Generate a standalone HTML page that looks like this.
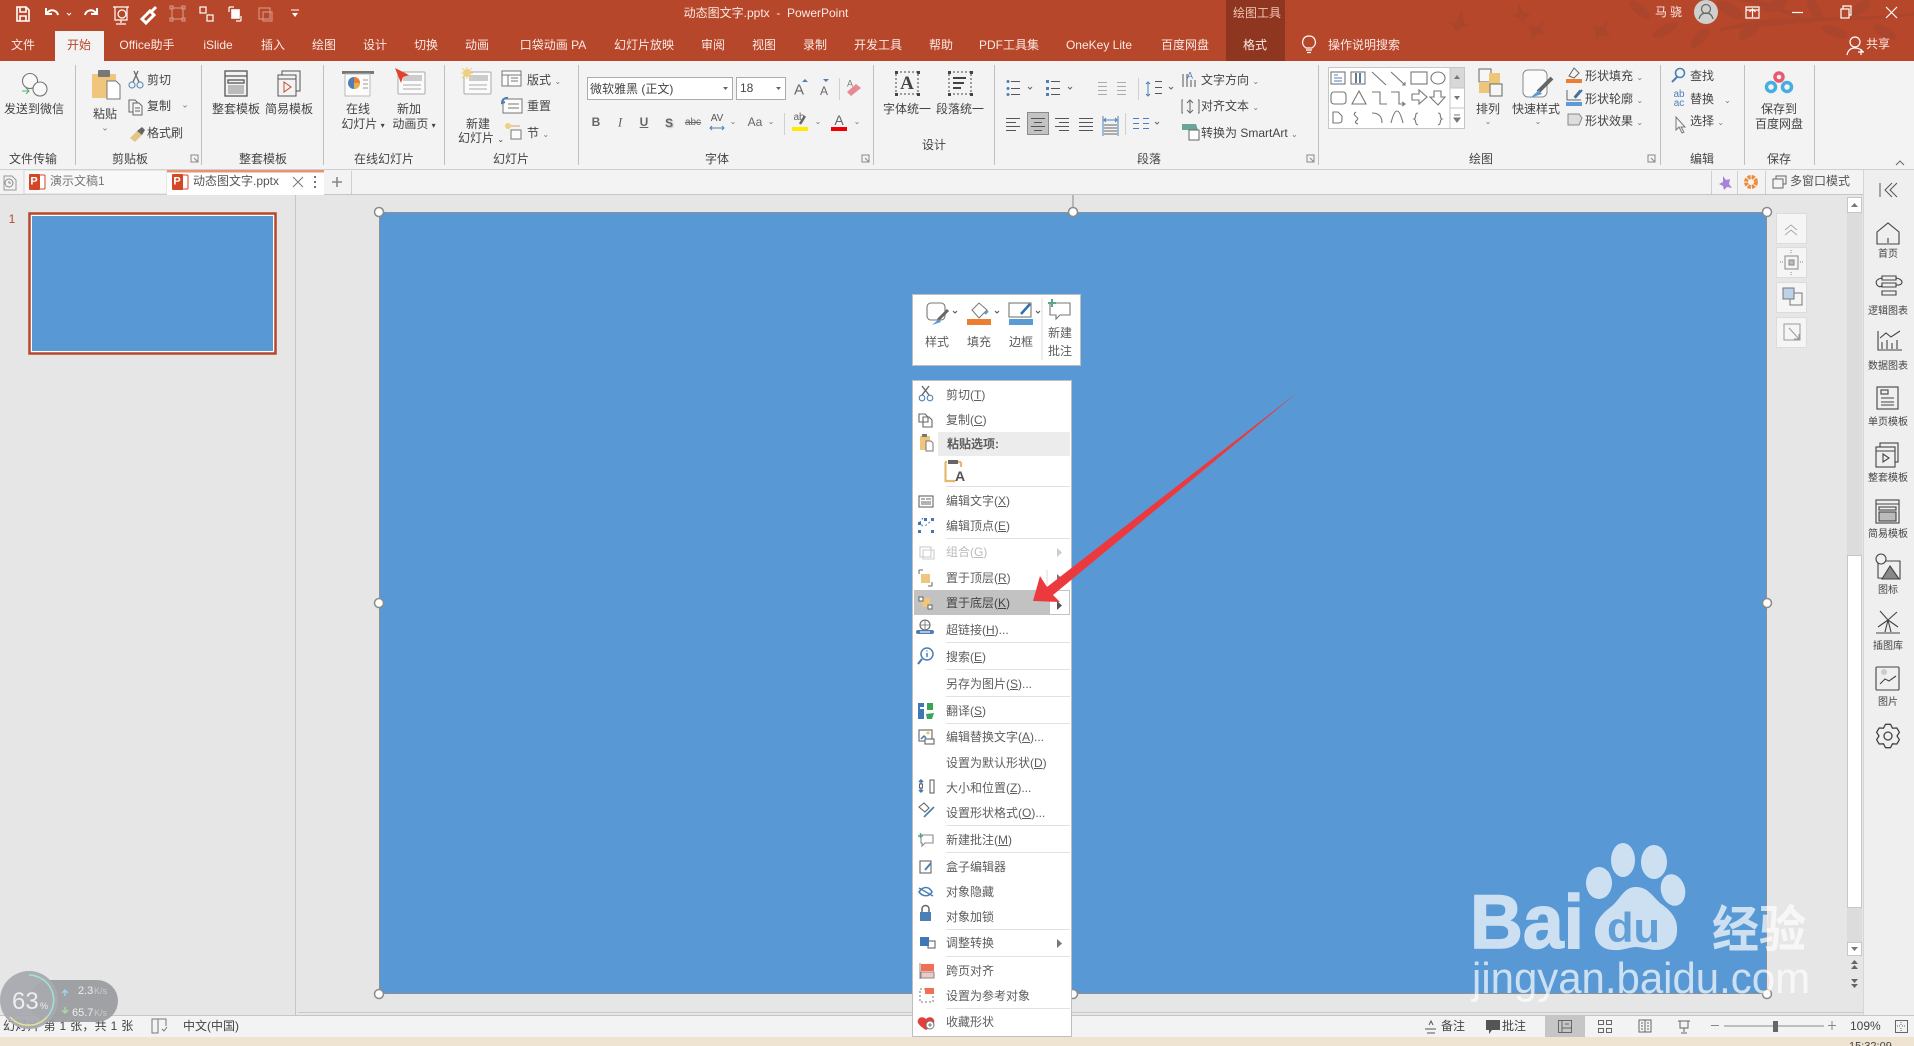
<!DOCTYPE html>
<html lang="zh"><head><meta charset="utf-8"><title>动态图文字.pptx - PowerPoint</title>
<style>
html,body{margin:0;padding:0;width:1914px;height:1046px;overflow:hidden;background:#e6e6e6}
body{position:relative;font:12px "Liberation Sans","Noto Sans CJK SC",sans-serif;color:#444}
svg.b{position:absolute;left:0;top:0}
.c,.l{position:absolute;white-space:nowrap;line-height:1}
.c{transform:translate(-50%,-50%)}
.l{transform:translateY(-50%)}
.w{color:#fbeae5}
.s{font-size:10px;color:#444}
.m{color:#5d5d5d}
.g{color:#777}
u{text-underline-offset:1px}
</style></head><body>
<svg class="b" width="1914" height="1046" viewBox="0 0 1914 1046" fill="none">
<rect width="1914" height="61" fill="#B7472A"/>
<g fill="#ab452b"><path d="M1914 14C1840 24 1780 12 1720 30M1800 18C1770 2 1750 0 1740 0" stroke="#ab452b" stroke-width="3"/>
<ellipse cx="1640" cy="10" rx="13" ry="5" transform="rotate(40 1640 10)"/><ellipse cx="1665" cy="30" rx="14" ry="5" transform="rotate(-30 1665 30)"/><ellipse cx="1730" cy="10" rx="15" ry="6" transform="rotate(30 1730 10)"/><ellipse cx="1750" cy="30" rx="14" ry="5" transform="rotate(-40 1750 30)"/><ellipse cx="1775" cy="6" rx="13" ry="5" transform="rotate(-20 1775 6)"/><ellipse cx="1815" cy="10" rx="13" ry="5" transform="rotate(60 1815 10)"/><ellipse cx="1835" cy="32" rx="14" ry="5" transform="rotate(20 1835 32)"/><ellipse cx="1860" cy="8" rx="12" ry="5" transform="rotate(-35 1860 8)"/><ellipse cx="1885" cy="32" rx="13" ry="5" transform="rotate(30 1885 32)"/><ellipse cx="1700" cy="38" rx="13" ry="5" transform="rotate(-50 1700 38)"/>
<path d="M1448 22l8 0 6-12 2 12 6 4-8 1-6 5-2-5z"/><path d="M1518 2l5 10 8 2-6 4-1 6-5-6-7-2 6-4z"/><path d="M1528 26l8 1 8-6-2 8 4 6-8-1-6 6-1-7z"/><path d="M1592 26l8 1 8-6-2 8 4 8-8-2-6 6-1-9z"/></g>
<rect x="1226" width="59" height="61" fill="#8f3620"/>
<rect x="55" y="31" width="49" height="30" fill="#f3f3f3"/>
<rect y="61" width="1914" height="108" fill="#f3f3f3"/>
<rect y="169" width="1914" height="1" fill="#cfcfcf"/>
<rect y="170" width="1914" height="24" fill="#f3f3f3"/>
<rect y="194" width="1863" height="1" fill="#c6c6c6"/>
<rect y="195" width="1863" height="821" fill="#e6e6e6"/>
<rect x="1863" y="170" width="51" height="846" fill="#efefef"/>
<rect x="1863" y="170" width="1" height="846" fill="#d6d6d6"/>
<rect y="1016" width="1914" height="21" fill="#f3f3f3"/>
<rect y="1015" width="1914" height="1" fill="#c6c6c6"/>
<rect y="1037" width="1914" height="9" fill="#efe3d2"/>
<rect x="298" y="1012" width="1565" height="1" fill="#cacaca"/>
<rect x="295" y="195" width="1" height="820" fill="#c6c6c6"/>

<!-- group separators -->
<g fill="#c0c0c0"><rect x="75" y="65" width="1" height="100"/><rect x="201" y="65" width="1" height="100"/><rect x="323" y="65" width="1" height="100"/><rect x="444" y="65" width="1" height="100"/><rect x="578" y="65" width="1" height="100"/><rect x="873" y="65" width="1" height="100"/><rect x="994" y="65" width="1" height="100"/><rect x="1318" y="65" width="1" height="100"/><rect x="1660" y="65" width="1" height="100"/><rect x="1744" y="65" width="1" height="100"/><rect x="1814" y="65" width="1" height="100"/></g>

<!-- QAT -->
<g stroke="#fff" stroke-width="1.6">
<path d="M17 7h9l3 3v11H17zM20 7v5h6V7M20 21v-5h6v5"/>
<path d="M58 15a6 6 0 0 0-10-3l-2 2M46 8v6h6" stroke-width="2"/>
<path d="M85 15a6 6 0 0 1 10-3l2 2M97 8v6h-6" stroke-width="2"/>
<path d="M113 7h16M115 7v13h12V7M121 20v3M116 24h10" stroke-width="1.2"/><circle cx="122" cy="14" r="4" stroke-width="1.2"/>
<path d="M142 19l8-8 4 4-8 8zM152 11l4-4" stroke-width="3"/>
<g opacity=".4" stroke-width="1.2"><rect x="172" y="8" width="11" height="11"/><rect x="170" y="6" width="3" height="3"/><rect x="182" y="6" width="3" height="3"/><rect x="170" y="18" width="3" height="3"/><rect x="182" y="18" width="3" height="3"/></g>
<rect x="200" y="7" width="6" height="6" stroke-width="1.2"/><rect x="207" y="15" width="6" height="6" stroke-width="1.2"/>
<path d="M229 7h5M229 7v5M241 21h-5M241 21v-5" stroke-width="1.2"/><rect x="232" y="10" width="7" height="8" fill="#fff"/>
<g opacity=".4" stroke-width="1.2"><rect x="259" y="8" width="11" height="11"/><rect x="263" y="12" width="9" height="9"/></g>
<path d="M291 10h8" stroke-width="1"/><path d="M292 13h6l-3 4z" fill="#fff" stroke="none"/>
<path d="M67 13l2 2 2-2" stroke-width="1"/>
</g>
<g stroke="#fff" stroke-width="1.2">
<path d="M1746 7h13v11h-13zM1752.500 17v-7M1749.500 12l3-3 3 3M1746 10h13" />
<path d="M1792 12.500h11"/>
<rect x="1841" y="9" width="8" height="9"/><path d="M1843 9V6h8v9h-2"/>
<path d="M1886 7l11 11M1897 7l-11 11"/>
<path d="M1306 48c-3-2-4-5-3-8 1-3 3-4 6-4s5 1 6 4c1 3 0 6-3 8zM1306 50h6M1307 52.500h4"/>
<circle cx="1855" cy="42" r="5"/><path d="M1847 55c1-5 4-7 8-7s7 2 8 4M1858 52h6M1861 49v6"/>
</g>
<circle cx="1706" cy="12" r="12" fill="#cfcfcf"/><circle cx="1706" cy="9" r="4.500" stroke="#666" stroke-width="1.200"/><path d="M1699 19c1-4 3-6 7-6s6 2 7 6" stroke="#666" stroke-width="1.200"/>

<!-- ribbon icons: left side -->
<g stroke="#777" stroke-width="1.100">
<circle cx="30" cy="81" r="7.500" fill="#f8f8f8"/><circle cx="40" cy="89" r="7" fill="#f8f8f8"/>
<path d="M22 91h7M26 88l3 3-3 3" stroke="#5cae78"/>
</g>
<rect x="92" y="74" width="24" height="24" rx="1" fill="#efc67c"/><rect x="98" y="70" width="12" height="7" rx="1" fill="#777"/>
<path d="M107 81h9l4 4v14h-13z" fill="#fff" stroke="#777"/>
<g stroke="#6a8fb8" stroke-width="1.200"><circle cx="132" cy="85" r="3"/><circle cx="140" cy="85" r="3"/></g><path d="M133 82l5-11M139 82l-5-11" stroke="#666" stroke-width="1.300"/>
<g stroke="#666"><path d="M129 100h6l3 3v9h-9z"/><path d="M133 103h6l3 3v9h-9z" fill="#f3f3f3"/><path d="M135 108h5M135 111h5"/></g>
<path d="M130 138l7-7 5 4-7 7z" fill="#e5c488"/><path d="M137 131l5-4 3 3-3 5z" fill="#666"/>
<g stroke="#555" stroke-width="1.300"><rect x="225" y="71" width="22" height="25"/><path d="M225 76h22"/><rect x="228" y="80" width="16" height="3"/></g><rect x="228" y="85" width="16" height="9" fill="#bbb"/>
<g stroke="#555"><rect x="282" y="71" width="18" height="20"/><rect x="278" y="75" width="18" height="21" fill="#f3f3f3"/><path d="M278 79h18"/></g><path d="M284 82l7 5-7 5z" stroke="#c9492c"/>
<rect x="342" y="71" width="32" height="3" fill="#777"/><rect x="345" y="74" width="25" height="22" fill="#fbfbfb" stroke="#bbb"/><circle cx="354" cy="83" r="6" fill="#4c7fb5"/><path d="M354 83V77a6 6 0 0 1 6 6z" fill="#ed7d31"/><path d="M354 83h6a6 6 0 0 1-6 6z" fill="#e4b04a"/><path d="M363 80h5M363 84h5M363 88h5" stroke="#999"/>
<rect x="398" y="72" width="27" height="22" rx="1" fill="#fbfbfb" stroke="#aaa"/><rect x="403" y="75" width="19" height="6" fill="#ccc"/><path d="M403 85h18M403 89h18" stroke="#aaa"/><path d="M395 68l14 7-6 2-2 6z" fill="#e2402d"/>
<rect x="464" y="72" width="27" height="22" rx="1" fill="#fbfbfb" stroke="#aaa"/><rect x="469" y="75" width="19" height="6" fill="#ccc"/><path d="M469 85h18M469 89h18" stroke="#aaa"/><circle cx="467" cy="73" r="4" fill="#f0cf80"/><path d="M467 67v12M461 73h12M462 68l10 10M472 68l-10 10" stroke="#f0cf80"/>
<g stroke="#777"><rect x="502" y="71" width="19" height="15" fill="#fbfbfb"/><path d="M502 75h19M508 75v11M511 78h7M511 81h7"/>
<rect x="503" y="99" width="19" height="14" fill="#fbfbfb"/><path d="M508 104h11M508 108h11"/>
<rect x="511" y="130" width="10" height="9" fill="#fbfbfb"/><path d="M510 126h10" stroke="#d69f6b"/></g>
<path d="M508 98a5 5 0 0 0-6 5l3-1" stroke="#4c7fb5" stroke-width="2"/><circle cx="508" cy="126" r="3" fill="#f0cf80"/>

<!-- font controls -->
<rect x="587.500" y="77.500" width="145" height="22" fill="#fff" stroke="#ababab"/>
<rect x="736.500" y="77.500" width="49" height="22" fill="#fff" stroke="#ababab"/>
<path d="M723 87h5l-2.500 3zM776 87h5l-2.500 3z" fill="#666"/>
<rect x="839" y="78" width="1" height="22" fill="#d0d0d0"/><rect x="784" y="113" width="1" height="22" fill="#d0d0d0"/>
<path d="M802 82l3-3 3 3zM829 79l-3 3-3-3z" fill="#4c7fb5"/>
<path d="M851 96l-4-4 9-8 5 4z" fill="#e78992"/>
<path d="M710 128h14M712 126l-2 2 2 2M722 126l2 2-2 2" stroke="#4c7fb5"/>
<rect x="792" y="127" width="16" height="4" fill="#ffeb00"/><rect x="831" y="127" width="16" height="4" fill="#f00000"/>
<path d="M805 116l-5 8" stroke="#666" stroke-width="2.500"/>
<g stroke="#444" stroke-dasharray="2 2"><rect x="896" y="72" width="22" height="22"/><rect x="949" y="72" width="22" height="22"/></g>
<g fill="#444"><rect x="895" y="71" width="3" height="3"/><rect x="917" y="71" width="3" height="3"/><rect x="895" y="93" width="3" height="3"/><rect x="917" y="93" width="3" height="3"/><rect x="948" y="71" width="3" height="3"/><rect x="970" y="71" width="3" height="3"/><rect x="948" y="93" width="3" height="3"/><rect x="970" y="93" width="3" height="3"/><rect x="953" y="77" width="13" height="2"/><rect x="953" y="82" width="11" height="2"/><rect x="953" y="87" width="8" height="2"/></g>

<!-- paragraph -->
<g stroke="#555"><path d="M1011 81.500h9M1011 88.500h9M1011 94.500h9M1051 81.500h9M1051 88.500h9M1051 94.500h9"/>
<path d="M1098 82.500h9M1098 86.500h9M1098 90.500h9M1098 94.500h9M1117 82.500h9M1117 86.500h9M1117 90.500h9M1117 94.500h9" stroke="#aaa"/>
<path d="M1155 81.500h7M1155 87.500h7M1155 93.500h7"/>
<path d="M1006 118.500h14M1006 122.500h10M1006 126.500h14M1006 130.500h10M1055 118.500h14M1059 122.500h10M1055 126.500h14M1059 130.500h10M1079 118.500h14M1079 122.500h14M1079 126.500h14M1079 130.500h14"/></g>
<g fill="#4c7fb5"><circle cx="1008" cy="81.500" r="1.500"/><circle cx="1008" cy="88.500" r="1.500"/><circle cx="1008" cy="94.500" r="1.500"/><rect x="1046" y="80" width="3" height="3"/><rect x="1046" y="87" width="3" height="3"/><rect x="1046" y="93" width="3" height="3"/></g>
<path d="M1028 87l2 2 2-2M1068 87l2 2 2-2M1169 87l2 2 2-2M1155 122l2 2 2-2" stroke="#666"/>
<rect x="1027.500" y="112.500" width="21" height="22" fill="#c3c3c3" stroke="#8a8a8a"/>
<path d="M1031 118.500h14M1034 122.500h8M1031 126.500h14M1034 130.500h8" stroke="#555"/>
<path d="M1103 116v20M1118 116v20M1104 120h13M1106 118l-2 2 2 2M1115 118l2 2-2 2" stroke="#4c7fb5"/>
<path d="M1104 125h13M1104 128h13M1104 131h13M1104 134h13" stroke="#666"/>
<rect x="1138" y="78" width="1" height="22" fill="#d0d0d0"/><rect x="1125" y="113" width="1" height="22" fill="#d0d0d0"/>
<path d="M1133 118.500h6M1133 123.500h6M1133 128.500h6M1143 118.500h6M1143 123.500h6M1143 128.500h6" stroke="#4c7fb5"/>
<path d="M1148 82v14M1146 84l2-2 2 2M1146 94l2 2 2-2" stroke="#4c7fb5"/>
<path d="M1183 74v13M1187 74v13M1191 80v7M1195 80v7" stroke="#555"/>
<path d="M1183 100h-1v13h1M1198 100h1v13h-1M1190 100v13M1187 103l3-3 3 3M1187 110l3 3 3-3" stroke="#666"/>
<path d="M1182 124h14l2 6h-16z" fill="#6aa59a"/><rect x="1189" y="130" width="10" height="10" fill="#fff" stroke="#666"/>

<!-- gallery -->
<rect x="1328.500" y="67.500" width="136" height="61" fill="#fff" stroke="#c6c6c6"/>
<rect x="1450" y="68" width="14" height="20" fill="#d8d8d8"/><path d="M1450 68v60M1450 88h14M1450 108h14" stroke="#c6c6c6"/>
<path d="M1454 79h6l-3-4zM1454 96h6l-3 4z" fill="#777"/><path d="M1454 115h6M1454 118h6l-3 4z" fill="#777" stroke="#777"/>
<g stroke="#777" stroke-width="1.100">
<rect x="1331" y="72" width="14" height="12"/><rect x="1351" y="72" width="14" height="12"/>
<path d="M1372 72l14 13M1391 72l14 13M1402 85h3v-3"/>
<rect x="1411" y="72" width="16" height="12"/><ellipse cx="1438" cy="78" rx="7" ry="6"/>
<rect x="1331" y="92" width="15" height="12" rx="3"/><path d="M1359 91l7 13h-14zM1372 92h8v12h7M1391 92h8v12h6M1402 102l3 2-3 2"/>
<path d="M1412 94h7v-4l8 7-8 7v-4h-7zM1434 91h7v6h4l-7 8-8-8h4z"/>
<path d="M1333 112h5l4 4v4a3 3 0 0 1-3 3h-6zM1356 112c-6 4 6 5 0 9c-2 2 2 3 2 3M1372 113c7 0 10 4 10 10M1391 123c4-16 8-16 12 0M1418 113c-4 0-1 5-4 6c3 1 0 5 4 6M1438 113c4 0 1 5 4 6c-3 1 0 5-4 6"/>
</g>
<rect x="1355" y="73" width="2" height="10" fill="#777"/><rect x="1359" y="73" width="2" height="10" fill="#4c7fb5"/>
<path d="M1334 75h4M1334 78h8M1334 81h8" stroke="#4c7fb5"/>
<!-- arrange etc -->
<rect x="1479" y="69" width="12" height="13" fill="#f6f6f6" stroke="#666"/><rect x="1489" y="73" width="11" height="11" fill="#eec67a"/><rect x="1479" y="82" width="11" height="11" fill="#eec67a"/><rect x="1490" y="84" width="12" height="12" fill="#f6f6f6" stroke="#666"/>
<rect x="1523" y="70" width="24" height="27" rx="5" fill="#fbfbfb" stroke="#888"/><path d="M1552 78l-14 14" stroke="#666" stroke-width="4"/><path d="M1530 98l9-8 3 4z" fill="#5b9bd5"/>
<rect x="1566" y="79" width="16" height="4" fill="#ed7d31"/><rect x="1566" y="102" width="16" height="4" fill="#5b9bd5"/>
<path d="M1569 76l5-8 5 5-5 5z" stroke="#666"/><path d="M1567 90v10h14M1580 90l-6 7" stroke="#666"/><path d="M1582 90l-7 8" stroke="#2f6fad" stroke-width="2"/>
<path d="M1568 114h11l3 4-3 7h-11z" fill="#ddd" stroke="#888"/>
<circle cx="1680" cy="73" r="4.500" stroke="#4c7fb5" stroke-width="1.600"/><path d="M1677 77l-5 5" stroke="#4c7fb5" stroke-width="2"/>
<path d="M1676 117v13l3-3 3 6 2-1-3-5h4z" fill="#f5f5f5" stroke="#777"/>
<g stroke-width="3.500"><circle cx="1771" cy="87" r="4.500" stroke="#45aee0"/><circle cx="1787" cy="87" r="4.500" stroke="#45aee0"/><circle cx="1779" cy="77" r="4" stroke="#e95a6e"/></g>
<path d="M1896 165l4-4 4 4" stroke="#666"/>
<g stroke="#888"><path d="M191 155h7v7h-7zM194 158l4 4M198 159v3h-3"/><path d="M862 155h7v7h-7zM865 158l4 4M869 159v3h-3"/><path d="M1307 155h7v7h-7zM1310 158l4 4M1314 159v3h-3"/><path d="M1648 155h7v7h-7zM1651 158l4 4M1655 159v3h-3"/></g>

<!-- tab strip -->
<rect x="24" y="170" width="143" height="24" fill="#f8f8f8" stroke="#d6d6d6"/>
<rect x="167" y="170" width="157" height="25" fill="#fff"/><rect x="167" y="170" width="157" height="2.500" fill="#e8956f"/>
<path d="M351.500 171v23M1711.500 171v23M1737.500 171v23M1765.500 171v23" stroke="#cfcfcf"/>
<path d="M4 176h8l4 4v10H4z" stroke="#999"/><circle cx="9" cy="183" r="4" stroke="#888"/><path d="M9 181v2h2" stroke="#888"/>
<g><rect x="35" y="175" width="10" height="14" rx="1" fill="#fff" stroke="#d24726"/><rect x="29" y="174" width="11" height="16" rx="1" fill="#d24726"/><rect x="178" y="175" width="10" height="14" rx="1" fill="#fff" stroke="#d24726"/><rect x="172" y="174" width="11" height="16" rx="1" fill="#d24726"/></g>
<path d="M293 177l10 10M303 177l-10 10" stroke="#777"/>
<g fill="#666"><circle cx="315" cy="177" r="1.100"/><circle cx="315" cy="182" r="1.100"/><circle cx="315" cy="187" r="1.100"/></g>
<path d="M337 177v10M332 182h10" stroke="#888" stroke-width="1.600"/>
<path d="M1723 176l3 4 4-1-1 5 3 4-5-1-3 3-1-4-4-2 4-2z" fill="#a884d8"/>
<circle cx="1751" cy="182" r="5" stroke="#ed8b3a" stroke-width="4" stroke-dasharray="3 1"/>
<rect x="1773" y="179" width="10" height="9" stroke="#666"/><path d="M1776 179v-3h10v8h-3" stroke="#666"/>
<path d="M1880 183v14M1892 183l-7 7 7 7M1897 183l-7 7 7 7" stroke="#555"/>

<!-- side buttons + slide -->
<g fill="#f5f5f5" stroke="#dcdcdc"><rect x="1776.500" y="213.500" width="30" height="30"/><rect x="1776.500" y="247.500" width="30" height="30"/><rect x="1776.500" y="282.500" width="30" height="30"/><rect x="1776.500" y="317.500" width="30" height="30"/></g>
<path d="M1785 230l6-5 6 5M1785 235l6-5 6 5" stroke="#aaa"/>
<rect x="1785" y="256" width="13" height="13" stroke="#888"/><rect x="1789" y="260" width="5" height="5" fill="#bbb" stroke="#888"/>
<path d="M1791 250v3M1791 272v3M1780 262h3M1800 262h3" stroke="#888" stroke-dasharray="1 1"/>
<rect x="1790" y="293" width="12" height="12" stroke="#777"/><rect x="1783" y="288" width="11" height="11" fill="#bcd2ea" stroke="#777"/>
<path d="M1784 324h16v16h-16zM1789 328l10 11M1799 334v5h-5" stroke="#999"/>
<rect x="1847" y="197" width="15" height="758" fill="#dcdcdc"/>
<rect x="1847.500" y="197.500" width="14" height="15" fill="#fff" stroke="#c6c6c6"/><path d="M1851 207h7l-3.500-4z" fill="#777"/>
<rect x="1847.500" y="555.500" width="14" height="352" fill="#fff" stroke="#c6c6c6"/>
<rect x="1847.500" y="942.500" width="14" height="13" fill="#fff" stroke="#c6c6c6"/><path d="M1851 947h7l-3.500 4z" fill="#777"/>
<path d="M1851 964l3.500-4 3.500 4zM1851 969l3.500-4 3.500 4zM1851 979l3.500 4 3.500-4zM1851 984l3.500 4 3.500-4z" fill="#666"/>

<path d="M1073 195v17" stroke="#888"/>
<rect x="379.500" y="212.500" width="1387" height="781" fill="#5899D5" stroke="#8a9096"/>
<g fill="#fff" stroke="#8b8b8b" stroke-width="1.500"><circle cx="379" cy="212" r="4.500"/><circle cx="1073" cy="212" r="4.500"/><circle cx="1767" cy="212" r="4.500"/><circle cx="379" cy="603" r="4.500"/><circle cx="1767" cy="603" r="4.500"/><circle cx="379" cy="994" r="4.500"/><circle cx="1073" cy="994" r="4.500"/><circle cx="1767" cy="994" r="4.500"/></g>
<rect x="29.500" y="213.500" width="246" height="140" fill="#fff" stroke="#b7472a" stroke-width="2.500"/><rect x="32" y="216" width="241" height="135" fill="#5899D5"/>

<!-- right panel icons -->
<g stroke="#444" stroke-width="1.100" fill="none">
<path d="M1877 232l11-9 11 9v12h-22zM1888 238v5"/>
<path d="M1882 276h14v4h-14zM1882 283h14v4h-14zM1882 291h14v4h-14zM1882 278c-12 2-2 13 0 7M1896 278c8 1 8 8 0 7"/>
<path d="M1878 331v19h24M1882 349v-7M1887 349v-9M1892 349v-6M1897 349v-9M1880 338l6-5 5 4 9-6"/>
<rect x="1877" y="387" width="21" height="22"/><rect x="1881" y="390" width="7" height="4"/><path d="M1881 398h13M1881 402h13M1881 405h13"/>
<rect x="1880" y="443" width="18" height="19"/><rect x="1876" y="447" width="19" height="20" fill="#efefef"/><path d="M1876 451h19M1883 454l6 4-6 4z"/>
<rect x="1876" y="500" width="23" height="23"/><path d="M1876 504h23"/><rect x="1879" y="507" width="17" height="3"/><rect x="1879" y="512" width="17" height="9" fill="#bbb"/>
<path d="M1878 578v-17h22v18z"/><circle cx="1881" cy="559" r="5" fill="#efefef"/><path d="M1890 566l9 13h-17z" fill="#888"/>
<path d="M1876 633h24M1885 632l3-12 3 12M1888 620l-8-9M1888 620l9-8M1888 620l-10 7M1888 620l10 7"/>
<rect x="1876" y="667" width="23" height="23" rx="1"/><circle cx="1884" cy="672" r="3" fill="#ccc" stroke="none"/><path d="M1880 684l5-5 4 2 7-5"/>
<g transform="translate(1888,736)" stroke-width="1.300" stroke-linejoin="round"><path d="M-2.500-11.700L2.500-11.700L4.500-7.800L8.900-8L11.400-3.700L9 0L11.400 3.700L8.900 8L4.500 7.800L2.500 11.700L-2.500 11.700L-4.500 7.800L-8.900 8L-11.400 3.700L-9 0L-11.400-3.700L-8.900-8L-4.500-7.800Z"/><circle r="4"/></g>
</g>

<!-- mini toolbar & menu -->
<rect x="912.500" y="294.500" width="168" height="71" fill="#fff" stroke="#bfbfbf"/>
<rect x="912.500" y="380.500" width="159" height="656" fill="#fff" stroke="#bfbfbf"/>
<rect x="938" y="432" width="132" height="24" fill="#ececec"/>
<rect x="914" y="590" width="135" height="25" fill="#c2c2c2"/>
<rect x="1049.500" y="590.500" width="20" height="24" fill="#fff" stroke="#c2c2c2"/>
<g stroke="#e2e2e6"><path d="M946 486.500h124M946 538.500h124M946 642.500h124M946 669.500h124M946 696.500h124M946 723.500h124M946 825.500h124M946 852.500h124M946 929.500h124M946 956.500h124M946 1008.500h124"/></g>
<path d="M1042 298v62M1047 570v20" stroke="#dedede"/>
<g fill="#777"><path d="M1057 601v9l5-4.500z" fill="#555"/><path d="M1057 548v9l5-4.500z" fill="#ccc"/><path d="M1057 574v9l5-4.500z"/><path d="M1057 939v9l5-4.500z"/></g>
<!-- mini icons -->
<g stroke="#777" stroke-width="1.100"><rect x="927" y="303" width="18" height="17" rx="4"/><rect x="1009" y="303" width="22" height="14" fill="#fff"/><path d="M1050 303h20v12h-10l-4 4v-4h-6z"/></g>
<path d="M948 310l-10 10" stroke="#666" stroke-width="3"/><path d="M932 325l7-6 2 3z" fill="#5b9bd5"/>
<path d="M972 310l7-7 8 7-8 8z" stroke="#777"/><path d="M985 314l3-3" stroke="#5b9bd5" stroke-width="2"/>
<rect x="967" y="319" width="24" height="6" fill="#ed7d31"/><rect x="1009" y="319" width="24" height="6" fill="#5b9bd5"/>
<path d="M1021 314l9-10" stroke="#2f6fad" stroke-width="2.500"/>
<path d="M1048 303h8M1052 299v8" stroke="#5aa58a" stroke-width="2"/>
<path d="M953 311l2 2 2-2M995 311l2 2 2-2M1036 311l2 2 2-2" stroke="#555"/>
<!-- menu icons -->
<g stroke="#666" stroke-width="1.100">
<path d="M922 395l7-9M929 395l-7-9" stroke-width="1.400"/><circle cx="922" cy="398" r="2.800" stroke="#4c7fb5"/><circle cx="930" cy="398" r="2.800" stroke="#4c7fb5"/>
<path d="M919 414h6l3 3v5h-9zM923 417h6l3 3v7h-9z"/>
<rect x="919" y="496" width="14" height="11"/><path d="M921 499h4M926 499h5M921 502h10M921 504h10" stroke-width=".9"/>
<path d="M923 518l-3 4 3 5M930 522l-5 4" stroke="#4c7fb5" stroke-dasharray="2 2"/>
<g fill="#3f78b8" stroke="none"><rect x="918" y="522" width="3" height="3"/><rect x="924" y="518" width="3" height="3"/><rect x="931" y="518" width="3" height="3"/><rect x="918" y="530" width="3" height="3"/><rect x="931" y="530" width="3" height="3"/></g>
<rect x="920" y="547" width="11" height="10" stroke="#ccc"/><path d="M923 550h11v9h-11z" stroke="#ccc"/>
<circle cx="927" cy="654" r="6" stroke="#4c7fb5" stroke-width="1.500"/><path d="M922 659l-4 5" stroke="#4c7fb5" stroke-width="2.200"/><path d="M927 653v4M927 650.500v1" stroke="#4c7fb5" stroke-width="1.500"/>
<rect x="919" y="730" width="13" height="11"/><rect x="925" y="739" width="9" height="5" fill="#fff"/><circle cx="928" cy="733" r="1.500" fill="#edb96b" stroke="none"/><path d="M921 739l3-3 2 2" stroke="#3f78b8" stroke-width="1.500"/>
<rect x="930" y="780" width="4" height="13"/><path d="M921 780v12M919 782l2-2 2 2M919 790l2 2 2-2" stroke="#3f78b8" stroke-width="1.500"/><rect x="919.500" y="784" width="3" height="4" fill="#fff"/>
<path d="M919 807l5-4 5 5-4 4z"/><path d="M924 817l10-10" stroke="#4c7fb5" stroke-width="1.700"/>
<path d="M921 835h12v8h-8l-3 3v-3h-1z" stroke="#888"/><path d="M918 836h5M920.500 833v5" stroke="#5aa58a" stroke-width="1.500"/>
<rect x="920" y="861" width="11" height="12"/><path d="M925 870l6-7" stroke="#4c7fb5" stroke-width="2"/>
<path d="M919 892c4-6 10-6 13 0-3 5-9 5-13 0z" stroke="#4c7fb5" stroke-width="1.600"/><path d="M919 888l14 8" stroke="#4c7fb5" stroke-width="1.400"/>
<rect x="928" y="941" width="7" height="7"/>
<circle cx="925" cy="625" r="5"/><path d="M920 625h10M925 620v10" stroke-width=".8"/><path d="M918 632h6M926 632h6" stroke="#4c7fb5" stroke-width="4" stroke-linecap="round"/><path d="M920 632h10" stroke="#fff"/>
</g>
<rect x="920" y="436" width="10" height="14" fill="#efc67c"/><rect x="922" y="434" width="5" height="3" fill="#777"/><path d="M926 441h5l2 2v8h-7z" fill="#fff" stroke="#777"/>
<path d="M945.500 462v19h10M961 462v5M945 462h2M958 462h3" stroke="#e7b872" stroke-width="2.200"/><rect x="948" y="460" width="10" height="4" fill="#666"/>
<rect x="921" y="574" width="9" height="9" fill="#efc67c"/><rect x="922" y="598" width="8" height="9" fill="#efc67c"/><rect x="919" y="597" width="4" height="4" fill="#fff" stroke="#666"/><rect x="928" y="605" width="4" height="4" fill="#fff" stroke="#666"/>
<path d="M919 570h4M919 570v4M932 586h-4M932 586v-4" stroke="#666"/>
<path d="M918 703h6v4h-4v2h4v4h-6z" fill="#3f78b8"/><path d="M918 713h6v6h-6z" fill="#3f78b8"/><path d="M927 703h6v7h-6zM926 714l8-1-2 6h-5z" fill="#39a356"/>
<rect x="920" y="912" width="11" height="9" fill="#4c7fb5"/><path d="M922 912v-3a3.500 3.500 0 0 1 7 0v3" stroke="#666" stroke-width="1.500"/>
<rect x="920" y="937" width="9" height="9" fill="#3f78b8"/>
<rect x="921" y="964" width="13" height="7" fill="#f46d55"/><rect x="921" y="972" width="13" height="6" fill="#eecac4" stroke="#888"/><path d="M920 963v16" stroke="#888"/>
<rect x="920" y="989" width="13" height="13" stroke="#777" stroke-dasharray="2 2"/><rect x="925" y="988" width="9" height="6" fill="#f46d55"/>
<path d="M926 1030c-8-5-9-8-8-10 1-3 5-4 8-1 3-3 7-2 8 1 1 2 0 5-8 10z" fill="#e2403d"/><circle cx="930" cy="1025" r="4" fill="#fff" stroke="#777"/><path d="M928 1025h4M930 1023v4" stroke="#777"/>

<!-- status -->
<path d="M152 1019h6v14h-6zM158 1019h8v7M162 1029l2 2 3-4" stroke="#777"/>
<path d="M1425 1029h11M1427 1033h8M1429 1025l2-4 2 4" stroke="#555"/>
<path d="M1486 1020h14v10h-8l-3 4v-4h-3z" fill="#555"/>
<rect x="1545" y="1016" width="40" height="21" fill="#c6c6c6"/>
<rect x="1558.500" y="1020.500" width="13" height="12" stroke="#666"/><path d="M1562 1021v11M1562 1028h9M1565 1024h4" stroke="#666"/>
<g stroke="#666"><rect x="1598.500" y="1020.500" width="5" height="4"/><rect x="1606.500" y="1020.500" width="5" height="4"/><rect x="1598.500" y="1028.500" width="5" height="4"/><rect x="1606.500" y="1028.500" width="5" height="4"/>
<path d="M1639 1020h12v12h-12zM1645 1020v12M1641 1023h2M1647 1023h2M1641 1026h2M1647 1026h2M1641 1029h2M1647 1029h2"/>
<path d="M1678 1021h12M1680 1021v7h8v-7M1684 1028v4M1681 1033h6"/>
<path d="M1711 1025.500h8M1828 1025.500h8M1832 1021v9M1724 1026h100" stroke="#888"/>
<rect x="1895.500" y="1020.500" width="12" height="12"/><path d="M1901 1022v3M1901 1028v3M1897 1026h3M1902 1026h3" stroke-dasharray="1 1"/></g>
<rect x="1773" y="1021" width="5" height="11" fill="#666"/>
</svg>

<!-- tabs -->
<span class="c w" style="left:766px;top:13px">动态图文字.pptx&nbsp; - &nbsp;PowerPoint</span>
<span class="c" style="left:1257px;top:13px;color:#f2c4b4">绘图工具</span>
<span class="c w" style="left:1670px;top:12px;letter-spacing:3px">马骁</span>
<span class="c w" style="left:23px;top:45px">文件</span>
<span class="c" style="left:79px;top:45px;color:#b7472a">开始</span>
<span class="c w" style="left:147px;top:45px">Office助手</span>
<span class="c w" style="left:218px;top:45px">iSlide</span>
<span class="c w" style="left:273px;top:45px">插入</span>
<span class="c w" style="left:324px;top:45px">绘图</span>
<span class="c w" style="left:375px;top:45px">设计</span>
<span class="c w" style="left:426px;top:45px">切换</span>
<span class="c w" style="left:477px;top:45px">动画</span>
<span class="c w" style="left:553px;top:45px">口袋动画 PA</span>
<span class="c w" style="left:644px;top:45px">幻灯片放映</span>
<span class="c w" style="left:713px;top:45px">审阅</span>
<span class="c w" style="left:764px;top:45px">视图</span>
<span class="c w" style="left:815px;top:45px">录制</span>
<span class="c w" style="left:878px;top:45px">开发工具</span>
<span class="c w" style="left:941px;top:45px">帮助</span>
<span class="c w" style="left:1009px;top:45px">PDF工具集</span>
<span class="c w" style="left:1099px;top:45px">OneKey Lite</span>
<span class="c w" style="left:1185px;top:45px">百度网盘</span>
<span class="c w" style="left:1255px;top:45px">格式</span>
<span class="l w" style="left:1328px;top:45px">操作说明搜索</span>
<span class="l w" style="left:1866px;top:44px">共享</span>

<!-- ribbon text -->
<span class="c" style="left:34px;top:109px">发送到微信</span>
<span class="c" style="left:105px;top:114px">粘贴</span><span class="c g" style="left:105px;top:128px;font-size:9px">⌄</span>
<span class="l" style="left:147px;top:80px">剪切</span>
<span class="l" style="left:147px;top:106px">复制</span><span class="c g" style="left:185px;top:105px;font-size:9px">⌄</span>
<span class="l" style="left:147px;top:133px">格式刷</span>
<span class="c" style="left:236px;top:109px">整套模板</span>
<span class="c" style="left:289px;top:109px">简易模板</span>
<span class="c" style="left:358px;top:109px">在线</span><span class="c" style="left:363px;top:124px">幻灯片 <small style="font-size:8px">▾</small></span>
<span class="c" style="left:409px;top:109px">新加</span><span class="c" style="left:414px;top:124px">动画页 <small style="font-size:8px">▾</small></span>
<span class="c" style="left:478px;top:124px">新建</span><span class="c" style="left:481px;top:138px">幻灯片 <small style="font-size:8px">⌄</small></span>
<span class="l" style="left:527px;top:80px">版式 <small class="g" style="font-size:8px">⌄</small></span>
<span class="l" style="left:527px;top:106px">重置</span>
<span class="l" style="left:527px;top:133px">节 <small class="g" style="font-size:8px">⌄</small></span>
<span class="l" style="left:590px;top:89px">微软雅黑 (正文)</span>
<span class="l" style="left:740px;top:88px">18</span>
<span class="c" style="left:799px;top:90px;font-size:15px;color:#666">A</span>
<span class="c" style="left:824px;top:91px;font-size:12px;color:#666">A</span>
<span class="c g" style="left:850px;top:84px;font-size:9px">A</span>
<span class="c" style="left:596px;top:122px;font-weight:bold;color:#666">B</span>
<span class="c" style="left:620px;top:122px;font-style:italic;font-family:'Liberation Serif',serif;color:#666;font-size:13px">I</span>
<span class="c" style="left:644px;top:122px;text-decoration:underline;font-weight:bold;color:#666">U</span>
<span class="c" style="left:669px;top:123px;font-weight:bold;color:#666;text-shadow:1px 1px 1px #bbb">S</span>
<span class="c" style="left:693px;top:123px;font-size:10px;text-decoration:line-through;color:#666">abc</span>
<span class="c" style="left:717px;top:119px;font-size:10px;color:#555">AV</span><span class="c g" style="left:733px;top:122px;font-size:8px">⌄</span>
<span class="c" style="left:755px;top:122px;color:#666">Aa</span><span class="c g" style="left:771px;top:122px;font-size:8px">⌄</span>
<span class="c" style="left:799px;top:118px;font-size:10px;color:#666">ab</span><span class="c g" style="left:818px;top:122px;font-size:8px">⌄</span>
<span class="c" style="left:839px;top:120px;font-size:14px;color:#666">A</span><span class="c g" style="left:857px;top:122px;font-size:8px">⌄</span>
<span class="c" style="left:717px;top:159px">字体</span>
<span class="c" style="left:907px;top:84px;font:bold 19px 'Liberation Serif',serif">A</span>
<span class="c" style="left:907px;top:109px">字体统一</span>
<span class="c" style="left:960px;top:109px">段落统一</span>
<span class="c" style="left:934px;top:145px">设计</span>
<span class="c" style="left:1149px;top:159px">段落</span>
<span class="c" style="left:1190px;top:76px;font-size:9px;color:#4c7fb5">A</span>
<span class="l" style="left:1201px;top:80px">文字方向 <small class="g" style="font-size:8px">⌄</small></span>
<span class="l" style="left:1201px;top:106px">对齐文本 <small class="g" style="font-size:8px">⌄</small></span>
<span class="l" style="left:1201px;top:133px">转换为 SmartArt <small class="g" style="font-size:8px">⌄</small></span>
<span class="c" style="left:1488px;top:109px">排列</span><span class="c g" style="left:1488px;top:122px;font-size:8px">⌄</span>
<span class="c" style="left:1536px;top:109px">快速样式</span><span class="c g" style="left:1538px;top:122px;font-size:8px">⌄</span>
<span class="l" style="left:1585px;top:76px">形状填充 <small class="g" style="font-size:8px">⌄</small></span>
<span class="l" style="left:1585px;top:99px">形状轮廓 <small class="g" style="font-size:8px">⌄</small></span>
<span class="l" style="left:1585px;top:121px">形状效果 <small class="g" style="font-size:8px">⌄</small></span>
<span class="l" style="left:1690px;top:76px">查找</span>
<span class="l" style="left:1690px;top:99px">替换 &nbsp;&nbsp;<small class="g" style="font-size:8px">⌄</small></span>
<span class="l" style="left:1690px;top:121px">选择 <small class="g" style="font-size:8px">⌄</small></span>
<span class="c" style="left:1679px;top:99px;font-size:10px;line-height:9px;text-align:center;color:#4c7fb5">ab<br>ac</span>
<span class="c" style="left:1779px;top:109px">保存到</span><span class="c" style="left:1779px;top:124px">百度网盘</span>
<span class="c" style="left:33px;top:159px">文件传输</span>
<span class="c" style="left:130px;top:159px">剪贴板</span>
<span class="c" style="left:263px;top:159px">整套模板</span>
<span class="c" style="left:384px;top:159px">在线幻灯片</span>
<span class="c" style="left:511px;top:159px">幻灯片</span>
<span class="c" style="left:1481px;top:159px">绘图</span>
<span class="c" style="left:1702px;top:159px">编辑</span>
<span class="c" style="left:1779px;top:159px">保存</span>

<!-- tab strip -->
<span class="c" style="left:34px;top:182px;font-size:11px;font-weight:bold;color:#fff">P</span>
<span class="c" style="left:177px;top:182px;font-size:11px;font-weight:bold;color:#fff">P</span>
<span class="l g" style="left:50px;top:181px">演示文稿1</span>
<span class="l" style="left:193px;top:181px;color:#555">动态图文字.pptx</span>
<span class="l" style="left:1790px;top:181px;color:#555">多窗口模式</span>
<span class="c" style="left:12px;top:219px;color:#b7472a">1</span>

<!-- right panel -->
<span class="c s" style="left:1888px;top:255px">首页</span>
<span class="c s" style="left:1888px;top:312px">逻辑图表</span>
<span class="c s" style="left:1888px;top:367px">数据图表</span>
<span class="c s" style="left:1888px;top:423px">单页模板</span>
<span class="c s" style="left:1888px;top:479px">整套模板</span>
<span class="c s" style="left:1888px;top:535px">简易模板</span>
<span class="c s" style="left:1888px;top:591px">图标</span>
<span class="c s" style="left:1888px;top:647px">插图库</span>
<span class="c s" style="left:1888px;top:703px">图片</span>

<!-- mini toolbar -->
<span class="c m" style="left:937px;top:342px">样式</span>
<span class="c m" style="left:979px;top:342px">填充</span>
<span class="c m" style="left:1021px;top:342px">边框</span>
<span class="c m" style="left:1060px;top:333px">新建</span>
<span class="c m" style="left:1060px;top:351px">批注</span>

<!-- menu -->
<span class="l m" style="left:946px;top:395px">剪切(<u>T</u>)</span>
<span class="l m" style="left:946px;top:420px">复制(<u>C</u>)</span>
<span class="l m" style="left:947px;top:444px;font-weight:bold">粘贴选项:</span>
<span class="c" style="left:960px;top:476px;font-size:14px;font-weight:bold;color:#555">A</span>
<span class="l m" style="left:946px;top:501px">编辑文字(<u>X</u>)</span>
<span class="l m" style="left:946px;top:526px">编辑顶点(<u>E</u>)</span>
<span class="l" style="left:946px;top:552px;color:#bbb">组合(<u>G</u>)</span>
<span class="l m" style="left:946px;top:578px">置于顶层(<u>R</u>)</span>
<span class="l" style="left:946px;top:603px;color:#444">置于底层(<u>K</u>)</span>
<span class="l m" style="left:946px;top:630px">超链接(<u>H</u>)...</span>
<span class="l m" style="left:946px;top:657px">搜索(<u>E</u>)</span>
<span class="l m" style="left:946px;top:684px">另存为图片(<u>S</u>)...</span>
<span class="l m" style="left:946px;top:711px">翻译(<u>S</u>)</span>
<span class="l m" style="left:946px;top:737px">编辑替换文字(<u>A</u>)...</span>
<span class="l m" style="left:946px;top:763px">设置为默认形状(<u>D</u>)</span>
<span class="l m" style="left:946px;top:788px">大小和位置(<u>Z</u>)...</span>
<span class="l m" style="left:946px;top:813px">设置形状格式(<u>O</u>)...</span>
<span class="l m" style="left:946px;top:840px">新建批注(<u>M</u>)</span>
<span class="l m" style="left:946px;top:867px">盒子编辑器</span>
<span class="l m" style="left:946px;top:892px">对象隐藏</span>
<span class="l m" style="left:946px;top:917px">对象加锁</span>
<span class="l m" style="left:946px;top:943px">调整转换</span>
<span class="l m" style="left:946px;top:971px">跨页对齐</span>
<span class="l m" style="left:946px;top:996px">设置为参考对象</span>
<span class="l m" style="left:946px;top:1022px">收藏形状</span>

<!-- status -->
<span class="l" style="left:3px;top:1026px;letter-spacing:.3px">幻灯片 第 1 张，共 1 张</span>
<span class="l" style="left:183px;top:1026px">中文(中国)</span>
<span class="l" style="left:1441px;top:1026px">备注</span>
<span class="l" style="left:1502px;top:1026px">批注</span>
<span class="l" style="left:1850px;top:1026px">109%</span>
<span class="l" style="left:1849px;top:1047px;font-size:11px">15:32:09</span>

<!-- overlays -->
<svg class="b" width="1914" height="1046" viewBox="0 0 1914 1046" fill="none" style="pointer-events:none">
<path d="M1298 392L1053 595L1060 602L1033 601L1040 576L1047 587Z" fill="#ec393e"/>
<!-- net meter -->
<rect x="29" y="980" width="89" height="42" rx="21" fill="#999ba0" opacity=".92"/>
<circle cx="29" cy="1000" r="29" fill="#a8aaaf" opacity=".95"/>
<path d="M29 975a25 25 0 0 1 18 42" stroke="#9fe3d6" stroke-width="1.500"/><path d="M47 1017a25 25 0 0 1-37 0" stroke="#e8e49a" stroke-width="1.500"/>
<path d="M62 993l3-3 3 3M65 990v6" stroke="#9fd3ec" stroke-width="1.500"/><path d="M62 1010l3 3 3-3M65 1007v6" stroke="#a6dca0" stroke-width="1.500"/>
<text x="12" y="1009" font-family="'Liberation Sans',sans-serif" font-size="24" fill="#eee">63</text><text x="40" y="1009" font-family="'Liberation Sans',sans-serif" font-size="9" fill="#eee">%</text>
<text x="78" y="994" font-family="'Liberation Sans',sans-serif" font-size="11" fill="#eee">2.3</text><text x="94" y="994" font-family="'Liberation Sans',sans-serif" font-size="9" fill="#ccc">K/s</text>
<text x="72" y="1016" font-family="'Liberation Sans',sans-serif" font-size="11" fill="#eee">65.7</text><text x="94" y="1016" font-family="'Liberation Sans',sans-serif" font-size="9" fill="#ccc">K/s</text>
<!-- watermark -->
<g fill="#fff" opacity=".7" font-family="'Liberation Sans','Noto Sans CJK SC',sans-serif">
<text x="1470" y="948" font-size="76" font-weight="bold" stroke="#fff" stroke-width="1.500" textLength="114" lengthAdjust="spacingAndGlyphs">Bai</text>
<ellipse cx="1599" cy="883" rx="13" ry="16"/><ellipse cx="1623" cy="860" rx="12" ry="17"/><ellipse cx="1654" cy="862" rx="13" ry="17"/><ellipse cx="1673" cy="890" rx="12" ry="16" transform="rotate(-15 1673 890)"/>
<path d="M1636 887c12 0 16 9 24 16 10 7 18 15 17 28 0 12-9 19-21 19-7 0-13-3-20-3s-14 4-22 3c-12 0-19-8-19-18 0-12 9-20 17-26 9-8 12-19 24-19z"/>
<text x="1712" y="947" font-size="50" font-weight="bold" textLength="94" lengthAdjust="spacingAndGlyphs" font-family="'Noto Sans CJK SC',sans-serif">经验</text>
<text x="1472" y="993" font-size="44" textLength="338" lengthAdjust="spacingAndGlyphs">jingyan.baidu.com</text>
</g>
<text x="1607" y="942" font-family="'Liberation Sans',sans-serif" font-size="42" font-weight="bold" fill="#5899D5" opacity=".9" textLength="53" lengthAdjust="spacingAndGlyphs">du</text>
</svg>
</body></html>
